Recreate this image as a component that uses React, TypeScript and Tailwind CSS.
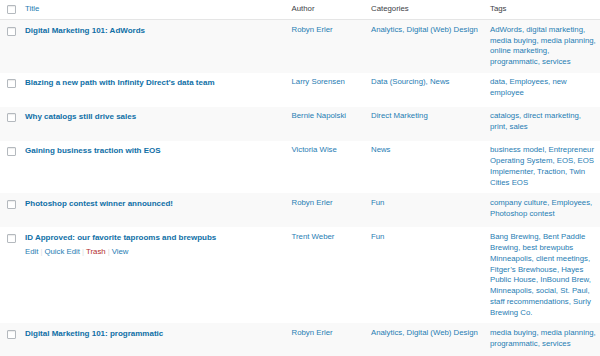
import React from "react";

type Row = {
  title: string;
  author: string;
  cats: string;
  tags: string[];
  actions?: boolean;
};

const rows: Row[] = [
  {
    title: "Digital Marketing 101: AdWords",
    author: "Robyn Erler",
    cats: "Analytics, Digital (Web) Design",
    tags: ["AdWords, digital marketing,", "media buying, media planning,", "online marketing,", "programmatic, services"],
  },
  {
    title: "Blazing a new path with Infinity Direct\u2019s data team",
    author: "Larry Sorensen",
    cats: "Data (Sourcing), News",
    tags: ["data, Employees, new", "employee"],
  },
  {
    title: "Why catalogs still drive sales",
    author: "Bernie Napolski",
    cats: "Direct Marketing",
    tags: ["catalogs, direct marketing,", "print, sales"],
  },
  {
    title: "Gaining business traction with EOS",
    author: "Victoria Wise",
    cats: "News",
    tags: ["business model, Entrepreneur", "Operating System, EOS, EOS", "Implementer, Traction, Twin", "Cities EOS"],
  },
  {
    title: "Photoshop contest winner announced!",
    author: "Robyn Erler",
    cats: "Fun",
    tags: ["company culture, Employees,", "Photoshop contest"],
  },
  {
    title: "ID Approved: our favorite taprooms and brewpubs",
    author: "Trent Weber",
    cats: "Fun",
    actions: true,
    tags: [
      "Bang Brewing, Bent Paddle",
      "Brewing, best brewpubs",
      "Minneapolis, client meetings,",
      "Fitger\u2019s Brewhouse, Hayes",
      "Public House, InBound Brew,",
      "Minneapolis, social, St. Paul,",
      "staff recommendations, Surly",
      "Brewing Co.",
    ],
  },
  {
    title: "Digital Marketing 101: programmatic",
    author: "Robyn Erler",
    cats: "Analytics, Digital (Web) Design",
    tags: ["media buying, media planning,", "programmatic, services"],
  },
];

function Check() {
  return (
    <span className="block w-[9px] h-[9px] border border-[#b4b9be] rounded-[1px] bg-white shadow-[inset_0_1px_1px_rgba(0,0,0,0.08)]" />
  );
}

const grid = "grid grid-cols-[19.5px_266.5px_79.5px_119px_115.5px]";

export default function App() {
  return (
    <div
      className="w-[600px] h-[356px] overflow-hidden bg-white text-[7.8px] text-[#1f7db3]"
      style={{ fontFamily: '"Liberation Sans", Arial, sans-serif' }}
    >
      <div className={`${grid} h-[20px] items-center border-b border-[#e5e5e5] bg-white`}>
        <div className="pl-[7px]">
          <Check />
        </div>
        <div className="px-[5.5px] leading-[10.8px]">Title</div>
        <div className="px-[5.5px] leading-[10.8px] text-[#3c4146]">Author</div>
        <div className="px-[5.5px] leading-[10.8px] text-[#3c4146]">Categories</div>
        <div className="px-[5.5px] leading-[10.8px] text-[#3c4146]">Tags</div>
      </div>
      {rows.map((r, i) => (
        <div key={i} className={`${grid} ${i % 2 === 0 ? "bg-[#f9f9f9]" : "bg-white"}`}>
          <div className="pl-[7px] pt-[6.7px]">
            <Check />
          </div>
          <div className="px-[5.5px] py-[4.75px]">
            <div className="leading-[11px] font-bold text-[8px] text-[#0f6fa6] whitespace-nowrap">{r.title}</div>
            <div className={`pt-[2.5px] leading-[11px] whitespace-nowrap ${r.actions ? "" : "invisible"}`}>
              <span>Edit</span>
              <span className="text-[#ddd] mx-[2px]">|</span>
              <span>Quick Edit</span>
              <span className="text-[#ddd] mx-[2px]">|</span>
              <span className="text-[#b32d2e]">Trash</span>
              <span className="text-[#ddd] mx-[2px]">|</span>
              <span>View</span>
            </div>
          </div>
          <div className="px-[5.5px] py-[4.75px] leading-[10.8px] whitespace-nowrap">{r.author}</div>
          <div className="px-[5.5px] py-[4.75px] leading-[10.8px] whitespace-nowrap">{r.cats}</div>
          <div className="px-[5.5px] py-[4.75px] leading-[10.8px]">
            {r.tags.map((t, j) => (
              <div key={j} className="whitespace-nowrap">
                {t}
              </div>
            ))}
          </div>
        </div>
      ))}
    </div>
  );
}
